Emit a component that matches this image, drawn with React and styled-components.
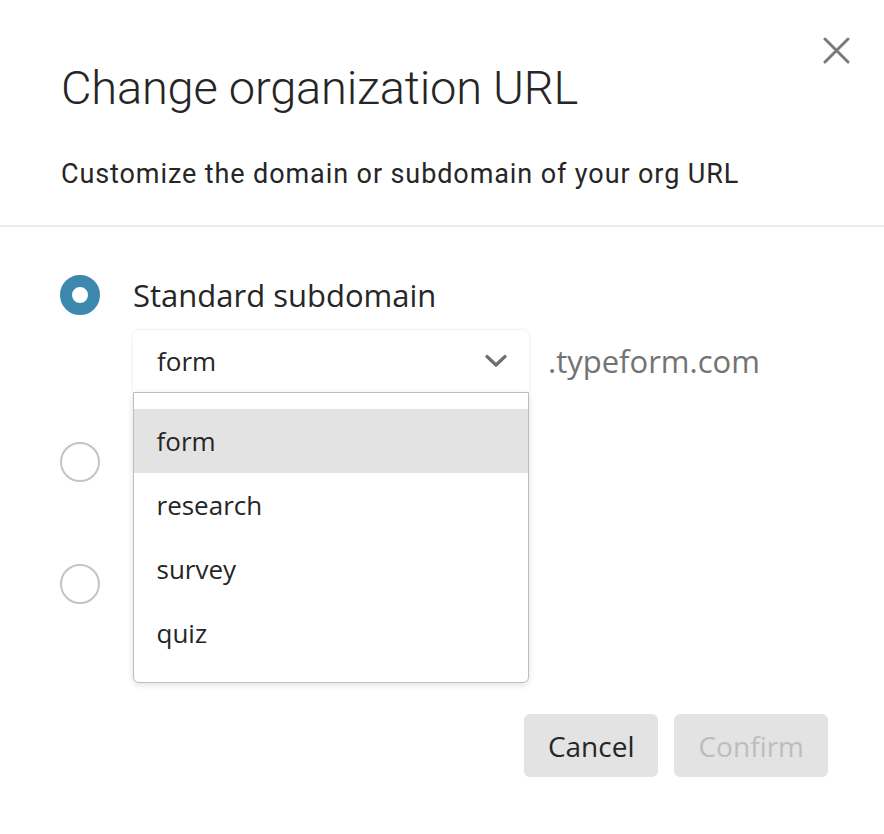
import React, { useState } from "react";
import styled, { createGlobalStyle } from "styled-components";

const GlobalStyle = createGlobalStyle`
  * { box-sizing: border-box; }
  body {
    margin: 0;
    background: #ffffff;
    font-family: "Open Sans", "Liberation Sans", sans-serif;
    color: #262626;
  }
`;

const OPTIONS = ["form", "research", "survey", "quiz"];

const CloseIcon = () => (
  <svg width="27" height="27" viewBox="0 0 27 27" fill="none">
    <path
      d="M2 2L25 25M25 2L2 25"
      stroke="#7a7a7a"
      strokeWidth="3"
      strokeLinecap="round"
    />
  </svg>
);

const Chevron = () => (
  <svg width="22" height="14" viewBox="0 0 22 14" fill="none">
    <path
      d="M2 2.5L11 11L20 2.5"
      stroke="#6f6f6f"
      strokeWidth="3.2"
      strokeLinecap="round"
      strokeLinejoin="round"
    />
  </svg>
);

const App = () => {
  const [selected, setSelected] = useState("form");

  return (
    <>
      <GlobalStyle />
      <Dialog>
        <CloseButton aria-label="Close">
          <CloseIcon />
        </CloseButton>
        <Header>
          <Title>Change organization URL</Title>
          <Subtitle>Customize the domain or subdomain of your org URL</Subtitle>
        </Header>
        <Body>
          <Option>
            <Radio checked />
            <OptionContent>
              <OptionLabel>Standard subdomain</OptionLabel>
              <FieldRow>
                <SelectWrap>
                  <Trigger>
                    <span>{selected}</span>
                    <Chevron />
                  </Trigger>
                  <Menu>
                    {OPTIONS.map((item) => (
                      <MenuItem
                        key={item}
                        active={item === selected}
                        onClick={() => setSelected(item)}
                      >
                        {item}
                      </MenuItem>
                    ))}
                  </Menu>
                </SelectWrap>
                <Suffix>.typeform.com</Suffix>
              </FieldRow>
            </OptionContent>
          </Option>
          {/* the labels of these two are covered by the open menu */}
          <Option spacing={50}>
            <Radio />
          </Option>
          <Option spacing={82}>
            <Radio />
          </Option>
        </Body>
        <Footer>
          <Button>Cancel</Button>
          <Button disabled>Confirm</Button>
        </Footer>
      </Dialog>
    </>
  );
};

export default App;

const Dialog = styled.div`
  position: relative;
  width: 884px;
  min-height: 834px;
  background: #ffffff;
`;

const CloseButton = styled.button`
  position: absolute;
  top: 37px;
  right: 34px;
  padding: 0;
  border: none;
  background: none;
  cursor: pointer;
  display: flex;
`;

const Header = styled.div`
  padding: 60px 61px 35px;
  border-bottom: 2px solid #ececec;
`;

const Title = styled.h1`
  margin: 0;
  font-family: "Roboto", "Liberation Sans", sans-serif;
  font-weight: 300;
  font-size: 47px;
  letter-spacing: -0.2px;
  line-height: 56px;
  color: #262626;
`;

const Subtitle = styled.p`
  margin: 42px 0 0;
  font-family: "Roboto", "Liberation Sans", sans-serif;
  font-weight: 400;
  font-size: 27px;
  letter-spacing: 0.9px;
  line-height: 32px;
  color: #262626;
`;

const Body = styled.div`
  padding: 48px 61px 0 60px;
  display: flex;
  flex-direction: column;
`;

const Option = styled.div`
  display: flex;
  align-items: flex-start;
  gap: 33px;
  margin-top: ${(p) => (p.spacing ? `${p.spacing}px` : "0")};
`;

const Radio = styled.span`
  flex: none;
  width: 40px;
  height: 40px;
  border-radius: 50%;
  background: #ffffff;
  border: ${(p) => (p.checked ? "12px solid #3d88ae" : "2px solid #c4c4c4")};
`;

const OptionContent = styled.div`
  display: flex;
  flex-direction: column;
`;

const OptionLabel = styled.div`
  font-size: 31px;
  font-weight: 500;
  line-height: 40px;
  color: #262626;
`;

const FieldRow = styled.div`
  margin-top: 15px;
  display: flex;
  align-items: center;
  gap: 19px;
`;

const SelectWrap = styled.div`
  position: relative;
  width: 396px;
`;

const Trigger = styled.div`
  height: 62px;
  display: flex;
  align-items: center;
  justify-content: space-between;
  padding: 0 22px 0 24px;
  font-size: 26px;
  color: #262626;
  background: #ffffff;
  border-radius: 6px 6px 0 0;
  box-shadow: 0 0 3px rgba(0, 0, 0, 0.12);
`;

const Menu = styled.ul`
  position: absolute;
  top: 100%;
  left: 0;
  right: 0;
  z-index: 2;
  margin: 0;
  padding: 16px 0 17px;
  list-style: none;
  background: #ffffff;
  border: 1.5px solid #bdbdbd;
  border-radius: 0 0 6px 6px;
  box-shadow: 0 2px 6px rgba(0, 0, 0, 0.12);
`;

const MenuItem = styled.li`
  height: 64px;
  display: flex;
  align-items: center;
  padding-left: 22.5px;
  font-size: 26px;
  color: #262626;
  cursor: pointer;
  background: ${(p) => (p.active ? "#e3e3e3" : "transparent")};
`;

const Suffix = styled.span`
  font-size: 31px;
  color: #737373;
`;

const Footer = styled.div`
  position: absolute;
  right: 56px;
  bottom: 57px;
  display: flex;
  gap: 16px;
`;

const Button = styled.button`
  height: 63px;
  padding: 0 24px;
  border: none;
  border-radius: 6px;
  background: #e3e3e3;
  font-family: "Open Sans", "Liberation Sans", sans-serif;
  font-size: 28px;
  color: ${(p) => (p.disabled ? "#bdbdbd" : "#262626")};
  cursor: ${(p) => (p.disabled ? "default" : "pointer")};
`;
